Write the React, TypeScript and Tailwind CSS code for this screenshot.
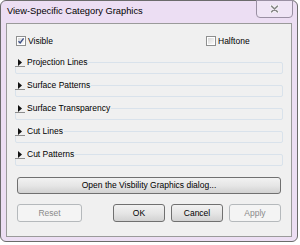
import React from "react"

const font = { fontFamily: '"Liberation Sans", Arial, sans-serif' }

const sections = [
  "Projection Lines",
  "Surface Patterns",
  "Surface Transparency",
  "Cut Lines",
  "Cut Patterns",
]

function Checkbox({ checked }: { checked?: boolean }) {
  return (
    <div className="w-[10px] h-[10px] border border-[#8e8f8f] bg-white p-[1px] shrink-0">
      <div className="relative w-full h-full bg-gradient-to-br from-[#d8d8d8] to-[#fbfbfb]">
        {checked && (
          <svg width="8" height="8" viewBox="0 0 8 8" className="absolute -left-[1px] -top-[1px]">
            <path d="M1.5 4.2 L3.2 6 L6.6 1.4" fill="none" stroke="#3c4f86" strokeWidth="1.4" />
          </svg>
        )}
      </div>
    </div>
  )
}

function Btn({ label, disabled, w }: { label: string; disabled?: boolean; w: string }) {
  return (
    <div
      className={
        "h-[18px] rounded-[3px] border flex items-center justify-center text-[8.5px] " +
        w +
        (disabled
          ? " border-[#b5b9bc] bg-[#f4f4f4] text-[#8a8a8a]"
          : " border-[#707070] bg-gradient-to-b from-[#f2f2f2] via-[#e6e6e6] to-[#d2d2d2] text-black")
      }
    >
      {label}
    </div>
  )
}

export default function App() {
  return (
    <div className="w-[300px] h-[245px] bg-white" style={font}>
      <div className="relative w-[298px] h-[242px] rounded-[6px] border border-[#6b6b6b] bg-[#ecdef3] flex flex-col">
        {/* title bar */}
        <div className="h-[22px] pl-[6px] flex items-center text-[9.3px] text-black">
          View-Specific Category Graphics
        </div>
        <div className="absolute top-[-1px] right-[4px] w-[37px] h-[18px] rounded-b-[4px] border border-[#9a90a3] bg-[#efe5f5] flex items-center justify-center">
          <svg width="9" height="8" viewBox="0 0 9 8">
            <path d="M1.5 1.2 L7.5 6.8 M7.5 1.2 L1.5 6.8" stroke="#ffffff" strokeWidth="3" strokeLinecap="round" />
            <path d="M1.5 1.2 L7.5 6.8 M7.5 1.2 L1.5 6.8" stroke="#8a8a8a" strokeWidth="1.6" strokeLinecap="round" />
          </svg>
        </div>

        {/* client area */}
        <div className="mx-[5px] h-[214px] border border-[#9a9a9a] bg-[#f0f0f0] text-[8.5px] text-black">
          <div className="flex items-center h-[10px] mt-[12px] pl-[9px]">
            <div className="flex items-center gap-[2px] w-[190px]">
              <Checkbox checked />
              <span>Visible</span>
            </div>
            <div className="flex items-center gap-[2px]">
              <Checkbox />
              <span>Halftone</span>
            </div>
          </div>

          <div className="mt-[5px]">
            {sections.map((s) => (
              <div key={s} className="relative h-[23px]">
                <div className="absolute left-[8px] right-[8px] top-[11px] h-[12px] border border-[#d9e2eb] rounded-[2px]" />
                <div className="relative ml-[8px] w-fit h-[16px] flex bg-[#f0f0f0] pr-[1px]">
                  <div className="w-[10px] h-[16px] border-b border-[#8c8c8c] flex items-start justify-center pt-[8px]">
                    <svg width="4" height="7" viewBox="0 0 4 7">
                      <path d="M0 0 L4 3.5 L0 7 Z" fill="#111" />
                    </svg>
                  </div>
                  <span className="ml-[2px] leading-[22px] h-[16px]">{s}</span>
                </div>
              </div>
            ))}
          </div>

          <div className="mt-[11px] mx-[10px] h-[17px] rounded-[3px] border border-[#707070] bg-gradient-to-b from-[#f2f2f2] via-[#e6e6e6] to-[#d2d2d2] flex items-center justify-center">
            Open the Visbility Graphics dialog...
          </div>

          <div className="mt-[10px] mx-[10px] flex">
            <Btn label="Reset" disabled w="w-[65px]" />
            <div className="flex-1" />
            <div className="flex gap-[6px]">
              <Btn label="OK" w="w-[52px]" />
              <Btn label="Cancel" w="w-[52px]" />
              <Btn label="Apply" disabled w="w-[52px]" />
            </div>
          </div>
        </div>
      </div>
    </div>
  )
}
